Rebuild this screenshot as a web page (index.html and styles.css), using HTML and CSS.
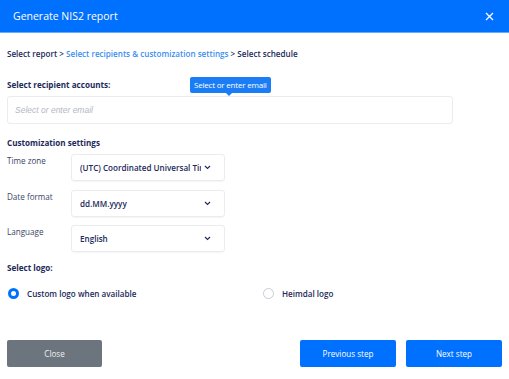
FILE: index.html
```html
<!DOCTYPE html>
<html>
<head>
<meta charset="utf-8">
<link rel="stylesheet" href="styles.css">
</head>
<body>
<div class="modal">
  <div class="header">
    <span class="title">Generate NIS2 report</span>
    <svg class="close" width="9" height="9" viewBox="0 0 9 9"><path d="M1 1L8 8M8 1L1 8" stroke="#fff" stroke-width="1.3"/></svg>
  </div>
  <div class="body">
    <div class="crumbs">Select report &gt; <span class="active">Select recipients &amp; customization settings</span> &gt; Select schedule</div>
    <div class="rec-head">
      <span class="section">Select recipient accounts:</span>
      <span class="tooltip">Select or enter email</span>
    </div>
    <div class="input">Select or enter email</div>
    <div class="section cust">Customization settings</div>
    <div class="row r-tz">
      <span class="label">Time zone</span>
      <div class="select"><span class="val">(UTC) Coordinated Universal Time</span><svg class="chev" width="7" height="5" viewBox="0 0 7 5"><path d="M1 1L3.5 3.5L6 1" fill="none" stroke="#1c2a5a" stroke-width="1.1"/></svg></div>
    </div>
    <div class="row r-df">
      <span class="label">Date format</span>
      <div class="select"><span class="val">dd.MM.yyyy</span><svg class="chev" width="7" height="5" viewBox="0 0 7 5"><path d="M1 1L3.5 3.5L6 1" fill="none" stroke="#1c2a5a" stroke-width="1.1"/></svg></div>
    </div>
    <div class="row r-lang">
      <span class="label">Language</span>
      <div class="select"><span class="val">English</span><svg class="chev" width="7" height="5" viewBox="0 0 7 5"><path d="M1 1L3.5 3.5L6 1" fill="none" stroke="#1c2a5a" stroke-width="1.1"/></svg></div>
    </div>
    <div class="section logo">Select logo:</div>
    <div class="radios">
      <label class="radio r1"><span class="dot on"></span>Custom logo when available</label>
      <label class="radio"><span class="dot"></span>Heimdal logo</label>
    </div>
    <div class="footer">
      <button class="btn gray">Close</button>
      <div class="right">
        <button class="btn blue">Previous step</button>
        <button class="btn blue">Next step</button>
      </div>
    </div>
  </div>
</div>
</body>
</html>
```
FILE: styles.css
```css
* { box-sizing: border-box; }
body { margin: 0; background: #fff; font-family: "Open Sans", "Noto Sans", sans-serif; color: #1c2a5a; }
.modal { width: 509px; height: 379px; }
.header { height: 33px; background: #0070ff; border-bottom: 1px solid #66aaff; display: flex; align-items: center; justify-content: space-between; padding: 0 15px 0 13px; }
.title { color: #fff; font-size: 10.5px; }
.close { display: block; }
.body { padding: 0 7px; }
.crumbs { font-size: 8.1px; font-weight: 600; margin-top: 15px; height: 12px; line-height: 12px; }
.crumbs .active { color: #3b8ff0; }
.rec-head { display: flex; align-items: flex-end; height: 29px; margin-top: 7px; position: relative; }
.section { font-size: 8.1px; font-weight: 700; line-height: 12px; }
.rec-head .section { margin-bottom: 5px; }
.tooltip { position: absolute; left: 183px; top: 10px; background: #1a7df5; color: #fff; font-size: 8px; height: 16px; line-height: 16px; padding: 0 4px; border-radius: 2px; font-weight: 500; letter-spacing: -0.2px; }
.tooltip::after { content: ""; position: absolute; left: 36px; bottom: -3px; border-left: 3px solid transparent; border-right: 3px solid transparent; border-top: 3px solid #1a7df5; }
.input { width: 446px; height: 28px; border: 1px solid #ececee; border-radius: 3px; font-size: 8.5px; font-style: italic; color: #b4b8c2; padding-left: 7px; line-height: 26px; font-family: "Liberation Sans", sans-serif; }
.cust { margin-top: 13px; }
.row { display: flex; align-items: flex-start; }
.r-tz { margin-top: 5px; }
.r-df { margin-top: 9px; }
.r-lang { margin-top: 8px; }
.label { width: 64px; font-size: 8.1px; line-height: 12px; padding-top: 1px; color: #3a4466; }
.select { width: 154px; height: 27px; border: 1px solid #ececee; border-radius: 3px; box-shadow: 0 1px 1px rgba(0,0,0,0.04); display: flex; align-items: center; padding: 0 10px 0 8px; font-size: 8.1px; font-weight: 600; gap: 3px; }
.val { flex: 1; white-space: nowrap; overflow: hidden; }
.chev { flex: none; margin-right: 3px; }
.logo { margin-top: 10px; }
.radios { display: flex; margin-top: 12px; height: 14px; align-items: center; }
.radio { display: flex; align-items: center; font-size: 8.1px; font-weight: 600; }
.r1 { width: 256px; padding-left: 1px; }
.dot { width: 11px; height: 11px; border-radius: 50%; border: 1px solid #c9ccd4; margin-right: 8px; background: #fff; }
.dot.on { border: 3.5px solid #0070ff; background: #fff; }
.footer { display: flex; justify-content: space-between; margin-top: 40px; }
.right { display: flex; gap: 10px; }
.btn { border: none; width: 96px; height: 27px; border-radius: 2px; color: #fff; font-family: "Open Sans", sans-serif; font-size: 8.1px; font-weight: 500; }
.gray { background: #6c757d; width: 95px; color: #eef0f3; }
.blue { background: #0070ff; }
```
